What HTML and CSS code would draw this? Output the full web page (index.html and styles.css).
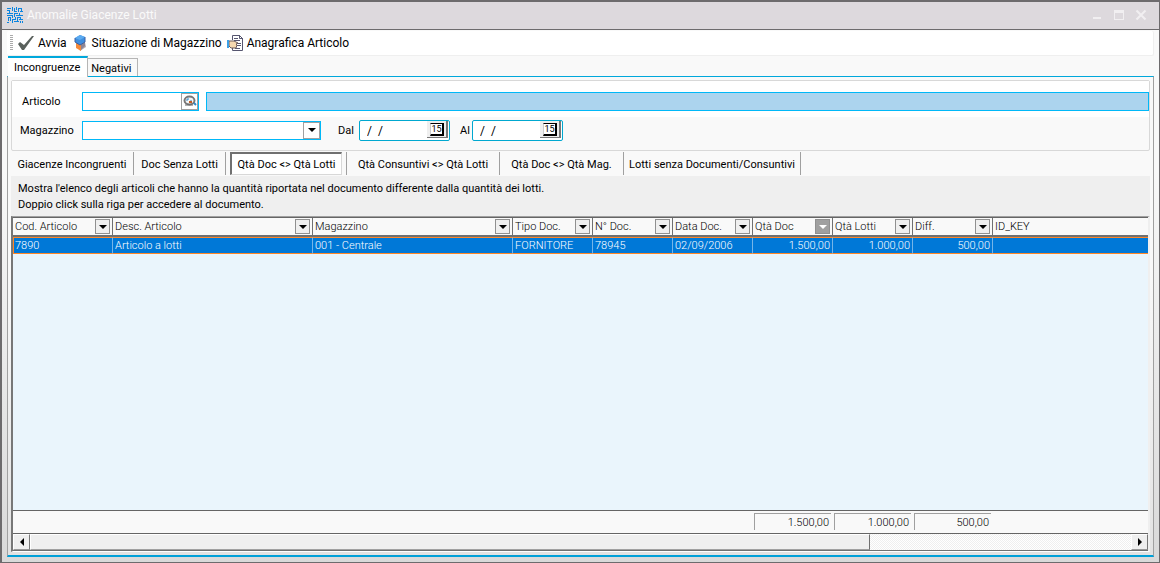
FILE: index.html
```html
<!DOCTYPE html>
<html lang="it">
<head>
<meta charset="utf-8">
<title>Anomalie Giacenze Lotti</title>
<link rel="stylesheet" href="styles.css">
</head>
<body>
<div class="window">
  <header class="titlebar">
    <svg class="logo" viewBox="0 0 16 16" width="16" height="16" fill="none" stroke="#0a84e0" shape-rendering="crispEdges"><path d="M0 1.500h4M5.500 0v4M0 3.500h3M2.500 3v3M0 6.500h6M7.500 1v4M7 4.500h3M9.500 0v3M11.500 1v4M11 1.500h3M14.500 1v4M13 4.500h3M12.500 6v3M8 6.500h3M0 8.500h5M7.500 6v4M9 8.500h7M5.500 8v3M1.500 10v4M1 10.500h3M3.500 10v4M0 15.500h2M5 12.500h4M5.500 12v4M8.500 10v3M10.500 10v4M10 10.500h4M13.500 10v3M12 12.500h4M7 14.500h5M15.500 14v2M13.500 14v2"/></svg>
    <h1 class="title">Anomalie Giacenze Lotti</h1>
    <div class="caption">
      <button class="cap" aria-label="Riduci"><svg width="12" height="12" viewBox="0 0 12 12"><path d="M2 8h8v2H2z" fill="#f1eff1"/></svg></button>
      <button class="cap" aria-label="Ingrandisci"><svg width="12" height="12" viewBox="0 0 12 12"><path d="M1 1h10v10H1zM2 4v6h8V4z" fill="#f1eff1" fill-rule="evenodd"/></svg></button>
      <button class="cap" aria-label="Chiudi"><svg width="12" height="12" viewBox="0 0 12 12"><path d="M1.500 1.500l9 9M10.500 1.500l-9 9" stroke="#f1eff1" stroke-width="2"/></svg></button>
    </div>
  </header>
  <main class="client">
    <nav class="toolbar">
      <span class="grip"></span>
      <button class="tool"><svg width="16" height="16" viewBox="0 0 16 16"><path d="M0 9l2-2 4 3 8-9h2L6 15H4z" fill="#59605c"/></svg>Avvia</button>
      <button class="tool"><svg width="16" height="16" viewBox="0 0 16 16"><path d="M7 10l6-3 1 5-6 4z" fill="#b4abb3"/><path d="M4 7l5 2v7l-5-3z" fill="#f5893a"/><path d="M9 9l4-2v4l-4 4z" fill="#8c8595"/><path d="M3 3l5-3 5 2v5L8 10 3 7z" fill="#3f8fe0"/><path d="M3 3l5-3 5 2-5 3z" fill="#5baaf0"/><path d="M3 3v4l5 3 5-3V2" fill="none" stroke="#3c5fa0"/></svg>Situazione di Magazzino</button>
      <button class="tool"><svg width="16" height="16" viewBox="0 0 16 16"><path d="M5.500 5V.5h7l3 3v12h-10V13" fill="#fff" stroke="#565670"/><path d="M12.500 0v3.500H16M7 3.500h4M7 5.500h6M10 8.500h4M10 10.500h4M8 13.500h5" fill="none" stroke="#565670"/><path d="M2 6h5l4 2-2 1 1 1-1 3H4l-2-2z" fill="#f6d9b0" stroke="#6b5b5b"/><path d="M0 5h2v8H0z" fill="#3aa0e8"/></svg>Anagrafica Articolo</button>
    </nav>
    <div class="tabs" role="tablist">
      <button class="tab active" role="tab" aria-selected="true">Incongruenze</button>
      <button class="tab" role="tab" aria-selected="false">Negativi</button>
    </div>
    <section class="page">
      <form class="filters">
        <div class="frow article">
          <label for="articolo" class="flabel art-label">Articolo</label>
          <div class="field lookup">
            <input id="articolo" type="text">
            <button type="button" class="find" aria-label="Cerca"><svg width="14" height="14" viewBox="0 0 14 14"><ellipse cx="6.500" cy="6.500" rx="5" ry="4" fill="#f5f5f5" stroke="#777" stroke-width="2"/><path d="M4 7V5h2M7 7h2" fill="none" stroke="#2f88c8"/><path d="M6 8h3" stroke="#c65a20" stroke-width="2"/><path d="M2 11h8" stroke="#666"/><path d="M11 9l2 2" stroke="#2f88c8" stroke-width="2"/></svg></button>
          </div>
          <input class="descr" type="text" readonly aria-label="Descrizione articolo">
        </div>
        <div class="frow warehouse">
          <label for="magazzino" class="flabel">Magazzino</label>
          <div class="combo"><select id="magazzino"><option></option></select><span class="drop"></span></div>
          <label for="dal" class="dlabel">Dal</label>
          <div class="date"><input id="dal" type="text" value="/  /"><button type="button" class="cal" aria-label="Calendario dal"><span>15</span></button></div>
          <label for="al" class="alabel">Al</label>
          <div class="date"><input id="al" type="text" value="/  /"><button type="button" class="cal" aria-label="Calendario al"><span>15</span></button></div>
        </div>
      </form>
      <div class="subtabs" role="tablist">
        <div class="slot s-inc"><button class="sub" role="tab">Giacenze Incongruenti</button></div>
        <div class="slot s-doc"><button class="sub" role="tab">Doc Senza Lotti</button></div>
        <div class="slot s-qta"><button class="sub selected" role="tab" aria-selected="true">Qtà Doc &lt;&gt; Qtà Lotti</button></div>
        <div class="slot s-cons"><button class="sub" role="tab">Qtà Consuntivi &lt;&gt; Qtà Lotti</button></div>
        <div class="slot s-mag"><button class="sub" role="tab">Qtà Doc &lt;&gt; Qtà Mag.</button></div>
        <div class="slot s-senza"><button class="sub" role="tab">Lotti senza Documenti/Consuntivi</button></div>
      </div>
      <p class="info">Mostra l'elenco degli articoli che hanno la quantità riportata nel documento differente dalla quantità dei lotti.<br>Doppio click sulla riga per accedere al documento.</p>
      <div class="grid">
        <div class="body">
          <table>
            <colgroup><col class="c100"><col class="c200"><col class="c200"><col class="c80"><col class="c80"><col class="c80"><col class="c80"><col class="c80"><col class="c80"><col></colgroup>
            <thead><tr>
              <th><div class="head">Cod. Articolo<button class="filter" aria-label="Filtra Cod. Articolo"></button></div></th>
              <th><div class="head">Desc. Articolo<button class="filter" aria-label="Filtra Desc. Articolo"></button></div></th>
              <th><div class="head">Magazzino<button class="filter" aria-label="Filtra Magazzino"></button></div></th>
              <th><div class="head">Tipo Doc.<button class="filter" aria-label="Filtra Tipo Doc."></button></div></th>
              <th><div class="head">N° Doc.<button class="filter" aria-label="Filtra N° Doc."></button></div></th>
              <th><div class="head">Data Doc.<button class="filter" aria-label="Filtra Data Doc."></button></div></th>
              <th><div class="head">Qtà Doc<button class="filter on" aria-label="Filtra Qtà Doc"></button></div></th>
              <th><div class="head">Qtà Lotti<button class="filter" aria-label="Filtra Qtà Lotti"></button></div></th>
              <th><div class="head">Diff.<button class="filter" aria-label="Filtra Diff."></button></div></th>
              <th><div class="head">ID_KEY</div></th>
            </tr></thead>
            <tbody><tr><td>7890</td><td>Articolo a lotti</td><td>001 - Centrale</td><td>FORNITORE</td><td>78945</td><td>02/09/2006</td><td class="num">1.500,00</td><td class="num">1.000,00</td><td class="num">500,00</td><td></td></tr></tbody>
          </table>
        </div>
        <div class="totals"><span class="total">1.500,00</span><span class="total">1.000,00</span><span class="total">500,00</span></div>
        <div class="scroll">
          <button class="arrow left" aria-label="Scorri a sinistra"></button>
          <div class="track"><div class="thumb"></div></div>
          <button class="arrow right" aria-label="Scorri a destra"></button>
        </div>
      </div>
    </section>
  </main>
</div>
</body>
</html>
```
FILE: styles.css
```css
* { box-sizing: border-box; }
body { margin: 0; font-family: Roboto, "Noto Sans", sans-serif; font-size: 11px; color: #000; }
button, input, select { font: inherit; color: inherit; margin: 0; padding: 0; border: 0; background: none; border-radius: 0; outline: 0; }
svg { display: block; flex: none; }

.window { min-height: 100vh; display: flex; flex-direction: column; border: solid #6d6b6d; border-width: 2px 1px 1px 2px; background: linear-gradient(#f9f9f9 30%, #d9d9d9); }
.titlebar { display: flex; align-items: center; height: 28px; padding: 0 12px 2px 5px; background: #ddd9dd; border-bottom: 1px solid #6d6b6d; }
.title { margin: 0 0 0 4px; font-size: 12px; line-height: 16px; font-weight: 400; color: #fafafa; }
.caption { display: flex; gap: 10px; margin-left: auto; }
.cap { width: 12px; height: 12px; }

.client { flex: 1; display: flex; flex-direction: column; padding: 1px 5px 5px 5px; }
.toolbar { display: flex; align-items: center; height: 25px; padding-left: 3px; background: #fff; border: solid #efefef; border-width: 0 1px 1px 0; border-radius: 2px; }
.grip { width: 3px; height: 16px; margin-right: 5px; background: repeating-linear-gradient(#aaa 0 1px, #fff 1px 2px); }
.tool { display: flex; align-items: center; gap: 4px; margin-right: 5px; font-size: 12px; line-height: 18px; white-space: nowrap; }

.tabs { display: flex; align-items: flex-end; height: 20px; padding-left: 1px; }
.tab { height: 18px; padding: 2px 6px 0 3px; border: solid #b5b5b5; border-width: 1px 1px 0 0; background: #f9f9f9; }
.tab.active { height: 21px; margin-bottom: -1px; padding: 0 7px 0 6px; border-top: 2px solid #00a8dc; background: #fff; z-index: 1; }

.page { flex: 1; display: flex; flex-direction: column; padding: 3px; border-style: solid; border-width: 1px 1px 2px; border-color: #00a8dc #a0a0a0 #00a0d8; background: linear-gradient(#f9f9f9 40%, #e2e2e2); }
.filters { border: 1px solid #d8d8d8; border-radius: 2px; background: #f9f9f9; }
.frow { display: flex; align-items: center; }
.article { height: 36px; padding: 4px 0 0 10px; background: #fff; }
.warehouse { height: 33px; padding: 0 0 6px 8px; }
.flabel { width: 62px; flex: none; }
.art-label { width: 60px; }
.field, .combo { position: relative; display: flex; height: 19px; border: 1px solid #00b8f8; background: #fff; }
.lookup { width: 117px; margin-right: 7px; }
.field input { flex: 1; min-width: 0; }
.find { width: 17px; border: 1px solid #a0a0a0; display: flex; align-items: center; justify-content: center; }
.descr { flex: 1; min-width: 0; height: 19px; border: 1px solid #00b8f8; background: #acd4ee; }
.combo { width: 239px; }
.combo select { width: 100%; appearance: none; }
.drop { position: absolute; top: 0; right: 0; width: 17px; height: 17px; border: 1px solid #a0a0a0; pointer-events: none; }
.drop::after, .filter::after { content: ""; display: block; width: 0; margin: 5px auto 0; border: solid transparent; border-width: 4px 4px 0; border-top-color: #000; }
.dlabel { width: 21px; margin-left: 17px; }
.alabel { width: 12px; margin-left: 10px; }
.date { display: flex; width: 91px; height: 21px; border: 1px solid #00a8d0; border-radius: 2px; background: #fff; }
.date input { flex: 1; min-width: 0; padding-left: 7px; font-size: 12px; white-space: pre; }
.cal { width: 21px; height: 17px; margin-right: 1px; padding: 2px 2px 1px 3px; background: #efefef; border: solid #777; border-width: 0 2px 1px 0; }
.cal span { display: block; height: 13px; border: solid #000; border-width: 1px 2px 2px 1px; border-left-color: #ccc; background: #fff; font-size: 9px; line-height: 10px; }

.subtabs { display: flex; height: 25px; padding-top: 1px; }
.slot { display: flex; padding: 0 4px; border-right: 1px solid #a0a0a0; height: 23px; }
.sub { flex: 1; padding-top: 1px; white-space: nowrap; }
.s-inc { width: 123px; }
.s-doc { width: 92px; }
.s-qta { width: 121px; }
.s-cons { width: 153px; }
.s-mag { width: 124px; }
.s-senza { width: 177px; }
.sub.selected { padding: 0; border: 1px solid #d8d8d8; border-top: 2px solid #707070; border-left: 2px solid #707070; background: #fff; }
.info { margin: 0; height: 40px; padding: 5px 7px 3px; background: #efefef; line-height: 16px; }

.grid { flex: 1; display: flex; flex-direction: column; border: 1px solid #a0a0a0; border-left: 2px solid #777; border-right: 2px solid #efefef; border-bottom-color: #fff; font-weight: 300; background: #f9f9f9; }
.body { flex: 1; background: #eaf5fc; border: solid #656565; border-width: 1px 0; }
table { width: 100%; table-layout: fixed; border-collapse: separate; border-spacing: 0; }
.c100 { width: 100px; }
.c200 { width: 200px; }
.c80 { width: 80px; }
th { height: 19px; padding: 0; font-weight: 300; text-align: left; background: #f9f9f9; border-right: 1px solid #707070; border-bottom: 2px solid #707070; }
.head { display: flex; align-items: center; justify-content: space-between; height: 17px; padding: 0 2px; white-space: nowrap; }
.filter { width: 15px; height: 15px; border: 1px solid #909090; background: #efefef; }
.filter::after { margin: 0 auto; }
.filter.on { background: #a0a0a0; }
.filter.on::after { border-top-color: #fff; }
td { height: 17px; padding: 0 2px; line-height: 14px; color: #fff; background: #0078d7; border-style: solid; border-width: 1px 1px 1px 0; border-color: #ff8728 #75b5e8 #ff8728; white-space: nowrap; }
td.num { text-align: right; }
td:first-child { padding-left: 1px; border-left: 1px solid #ff8728; }
th:last-child, td:last-child { border-right: 0; }
.totals { display: flex; gap: 3px; height: 22px; padding: 2px 0 3px 741px; }
.total { width: 77px; padding-right: 2px; border: solid #a0a0a0; border-width: 1px 0 0 1px; text-align: right; line-height: 17px; }
.scroll { display: flex; height: 18px; border-top: 1px solid #656565; border-bottom: 1px solid #707070; }
.arrow { display: flex; align-items: center; justify-content: center; width: 17px; background: #efefef; border: 1px solid #fff; border-right-color: #777; border-bottom-color: #999; }
.arrow::after { content: ""; border: solid transparent; border-width: 4px 0; }
.left::after { border-right: 4px solid #000; }
.right::after { border-left: 4px solid #000; }
.track { flex: 1; background: repeating-conic-gradient(#fff 0 25%, #efefef 0 50%) 0 0 / 2px 2px; }
.thumb { width: 76.3%; height: 100%; background: #efefef; border: 1px solid #fff; border-right: 1px solid #707070; border-bottom-color: #a0a0a0; }
```
